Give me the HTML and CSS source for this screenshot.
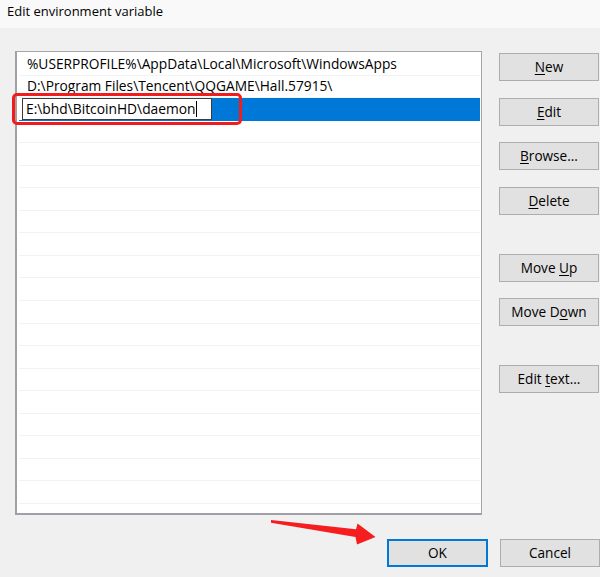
FILE: index.html
```html
<!DOCTYPE html>
<html>
<head>
<meta charset="utf-8">
<link rel="stylesheet" href="styles.css">
</head>
<body>
<div class="dialog">
  <div class="titlebar">Edit environment variable</div>
  <div class="main">
    <div class="listbox">
      <div class="row">%USERPROFILE%\AppData\Local\Microsoft\WindowsApps</div>
      <div class="row">D:\Program Files\Tencent\QQGAME\Hall.57915\</div>
      <div class="row selected"><div class="editbox">E:\bhd\BitcoinHD\daemon<span class="caret"></span></div></div>
      <div class="row"></div><div class="row"></div><div class="row"></div><div class="row"></div>
      <div class="row"></div><div class="row"></div><div class="row"></div><div class="row"></div>
      <div class="row"></div><div class="row"></div><div class="row"></div><div class="row"></div>
      <div class="row"></div><div class="row"></div><div class="row"></div><div class="row"></div>
      <div class="row"></div>
    </div>
    <div class="buttons">
      <button class="btn first"><u>N</u>ew</button>
      <button class="btn gap-s"><u>E</u>dit</button>
      <button class="btn gap-s"><u>B</u>rowse...</button>
      <button class="btn gap-s"><u>D</u>elete</button>
      <button class="btn gap-l">Move <u>U</u>p</button>
      <button class="btn gap-s">Move D<u>o</u>wn</button>
      <button class="btn gap-l">Edit <u>t</u>ext...</button>
    </div>
  </div>
  <div class="footer">
    <button class="btn ok">OK</button>
    <button class="btn">Cancel</button>
  </div>
  <div class="highlight"></div>
  <svg class="arrow" width="600" height="577" viewBox="0 0 600 577">
    <polygon points="271,520 356,529.3 357.5,523.5 375.5,537 357,544.5 355.5,537 271,522.8" fill="#f51d1d"/>
  </svg>
</div>
</body>
</html>
```
FILE: styles.css
```css
* { box-sizing: border-box; }
html, body { margin: 0; padding: 0; }
body {
  width: 600px;
  height: 577px;
  overflow: hidden;
  background: #f0f0f0;
  font-family: "Open Sans", "Noto Sans", "Liberation Sans", sans-serif;
  color: #000;
}
.dialog { position: relative; width: 600px; height: 577px; }
.titlebar {
  height: 28px;
  background: #f9f9f9;
  padding: 1px 0 0 7px;
  font-size: 13px;
  line-height: 20px;
}
.main {
  display: flex;
  align-items: flex-start;
  margin-top: 23px;
  padding-left: 15px;
}
.listbox {
  width: 467px;
  height: 464px;
  background: #fff;
  border: 1px solid #a6a6a6;
  border-left: 2px solid #a0a0a6;
  border-bottom: 2px solid #a0a0a6;
  padding: 1px 1px 0 1px;
  overflow: hidden;
}
.row {
  height: 22.55px;
  border-bottom: 1.5px solid #f2f2f2;
  margin-left: 1px;
  padding-left: 8px;
  font-size: 13.75px;
  line-height: 20px;
  white-space: nowrap;
  display: flex;
  align-items: center;
}
.row.selected {
  background: linear-gradient(to right, #fff 4px, #0078d7 4px);
  padding-left: 3px;
  border-bottom-color: #0078d7;
}
.editbox {
  width: 190px;
  height: 22px;
  background: #fff;
  border: 1px solid #3c3c3c;
  padding-left: 3px;
  font-size: 13.8px;
  line-height: 20px;
  display: flex;
  align-items: center;
  margin-top: 1px;
}
.caret {
  display: inline-block;
  width: 1px;
  height: 16px;
  background: #000;
}
.buttons {
  display: flex;
  flex-direction: column;
  margin-left: 17px;
  padding-top: 2px;
}
.btn {
  width: 100px;
  height: 28px;
  background: #e1e1e1;
  border: 1px solid #adadad;
  font-family: "Open Sans", "Noto Sans", "Liberation Sans", sans-serif;
  font-size: 13.6px;
  color: #000;
  padding: 0;
  margin: 0;
  line-height: 20px;
}
.btn u { text-underline-offset: 2px; }
.gap-s { margin-top: 16.5px; }
.gap-l { margin-top: 39px; }
.footer {
  display: flex;
  justify-content: flex-end;
  gap: 12px;
  margin-top: 24px;
}
.btn.ok {
  border: 2px solid #0078d7;
  width: 101px;
}
.highlight {
  position: absolute;
  left: 12px;
  top: 93px;
  width: 230px;
  height: 32px;
  border: 3px solid #f21c1c;
  border-radius: 5px;
}
.arrow { position: absolute; left: 0; top: 0; }
```
